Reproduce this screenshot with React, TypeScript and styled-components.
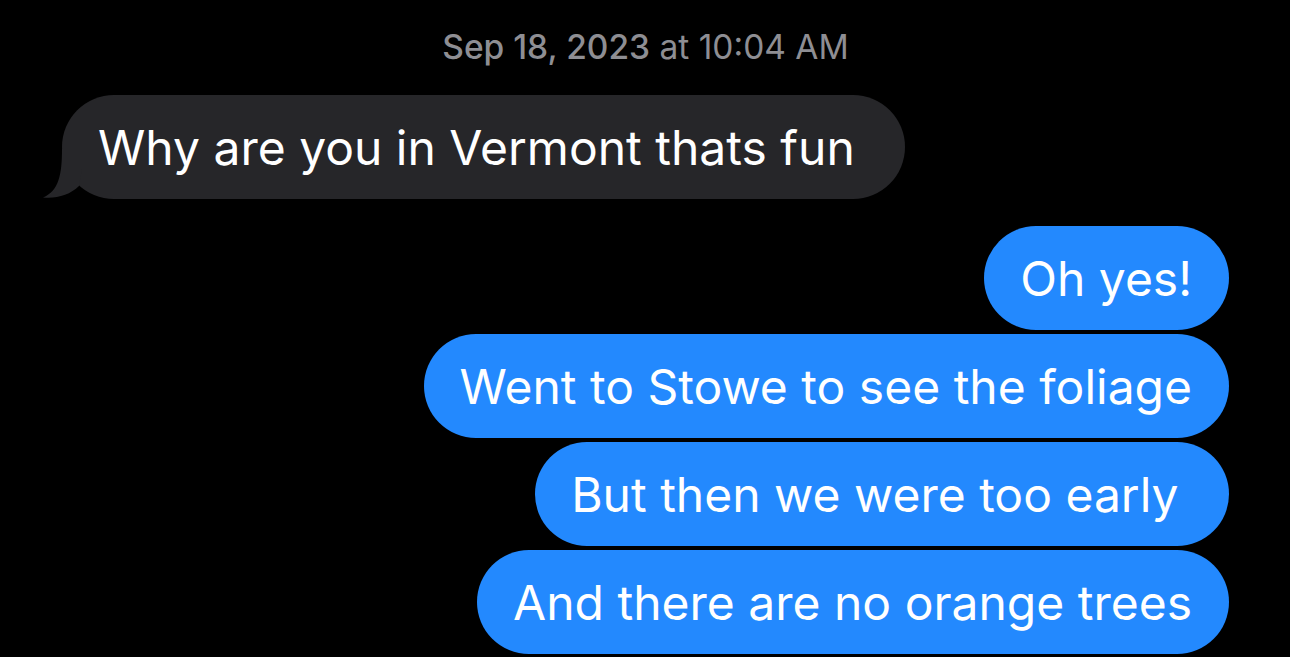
import styled, { createGlobalStyle } from 'styled-components';

const GlobalStyle = createGlobalStyle`
  html, body {
    margin: 0;
    padding: 0;
    background: #000;
  }
  body {
    font-family: Inter, "Noto Sans", "Liberation Sans", sans-serif;
    -webkit-font-smoothing: antialiased;
  }
`;

const Thread = styled.div`
  width: 1290px;
  height: 657px;
  overflow: hidden;
  box-sizing: border-box;
  padding: 27px 61px 0 62px;
  display: flex;
  flex-direction: column;
`;

const Stamp = styled.div`
  text-align: center;
  color: #8e8e93;
  font-size: 33.5px;
  line-height: 40px;
  margin-bottom: 28px;

  b {
    font-weight: 500;
  }
`;

const Group = styled.div<{ $mine?: boolean }>`
  display: flex;
  flex-direction: column;
  align-items: ${({ $mine }) => ($mine ? 'flex-end' : 'flex-start')};
  gap: 4px;
  margin-bottom: 27px;
`;

const Bubble = styled.div<{ $mine?: boolean }>`
  position: relative;
  box-sizing: border-box;
  height: 104px;
  padding: 0 37px 0 36px;
  display: flex;
  align-items: center;
  border-radius: 52px;
  font-size: 48px;
  white-space: pre;
  color: #fff;
  background: ${({ $mine }) => ($mine ? '#2389fe' : '#262629')};
`;

const Tail = styled.svg`
  position: absolute;
  left: -20px;
  bottom: 0;
  width: 40px;
  height: 50px;
`;

export default function App() {
  return (
    <>
      <GlobalStyle />
      <Thread>
        <Stamp>
          <b>Sep 18, 2023</b> at 10:04 AM
        </Stamp>
        <Group>
          <Bubble>
            <Tail viewBox="0 0 40 50">
              <path
                d="M20 0 C20 25 17 42 1 48.5 C14 50 28 46 37 37 L40 20 L40 0 Z"
                fill="#262629"
              />
            </Tail>
            {'Why are you in Vermont thats fun '}
          </Bubble>
        </Group>
        <Group $mine>
          <Bubble $mine>Oh yes!</Bubble>
          <Bubble $mine>Went to Stowe to see the foliage</Bubble>
          <Bubble $mine>{'But then we were too early '}</Bubble>
          <Bubble $mine>And there are no orange trees</Bubble>
        </Group>
      </Thread>
    </>
  );
}
